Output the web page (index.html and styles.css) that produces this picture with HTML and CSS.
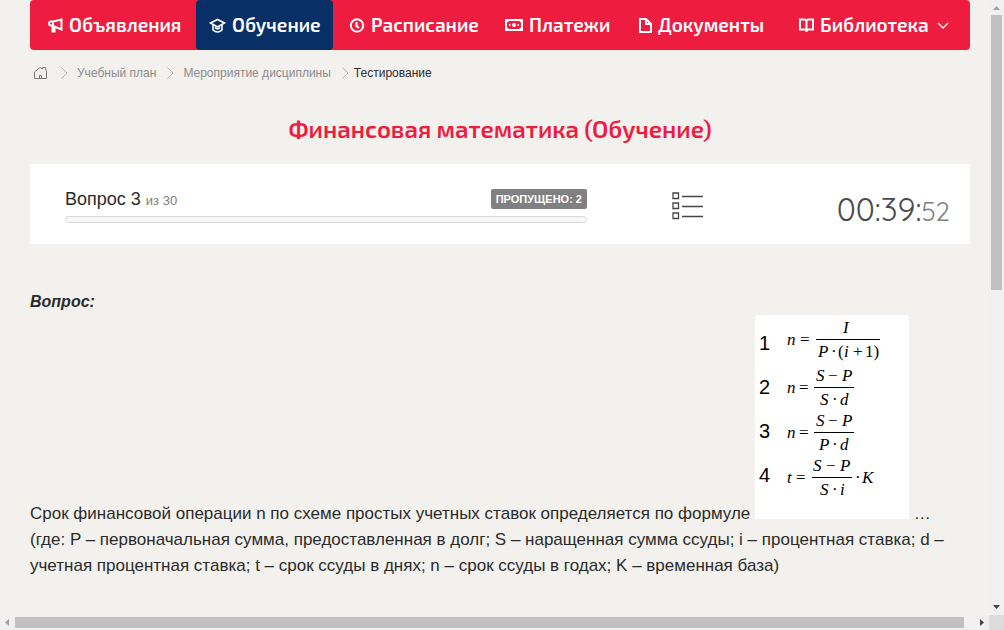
FILE: index.html
```html
<!DOCTYPE html>
<html lang="ru">
<head>
<meta charset="utf-8">
<meta name="viewport" content="width=device-width, initial-scale=1">
<title>Финансовая математика (Обучение)</title>
<link rel="stylesheet" href="styles.css">
</head>
<body>
<div class="viewport">
  <div class="page">
    <nav class="menu" aria-label="Главное меню">
      <a class="menu-item" href="#">
        <svg class="icon" width="15" height="15" viewBox="0 0 15 15"><path d="M5 3.500H3a2 2 0 0 0 0 4h2zM5 3.500L13.500 1.500v10L5 8M4.500 8v5.500h2V9"/></svg>
        Объявления</a>
      <a class="menu-item active" href="#">
        <svg class="icon cap" width="17" height="15" viewBox="0 0 17 15"><path d="M1.500 5L8.500 1.500l7 3.500-7 4zM4 7v5q4.500 4 9 0V7M6 9.500q2.500 3 5 0"/></svg>
        Обучение</a>
      <a class="menu-item" href="#">
        <svg class="icon" width="16" height="15" viewBox="0 0 16 15"><circle cx="8" cy="7.500" r="6.200"/><path d="M7.500 4v4l2.500 2"/></svg>
        Расписание</a>
      <a class="menu-item" href="#">
        <svg class="icon" width="18" height="12" viewBox="0 0 18 12"><path d="M1 1h16v10H1z"/><path class="solid" d="M1 1h4L1 4.500zM17 1h-4l4 3.500zM1 11h4L1 7.500zM17 11h-4l4-3.500zM7 6a2 2 0 1 0 4 0 2 2 0 0 0-4 0zM4 5h1.500v2H4zM12.500 5H14v2h-1.500z"/></svg>
        Платежи</a>
      <a class="menu-item" href="#">
        <svg class="icon" width="13" height="15" viewBox="0 0 13 15"><path d="M1 1h6l5 5v8H1zM7 1v5h5"/></svg>
        Документы</a>
      <a class="menu-item" href="#">
        <svg class="icon" width="15" height="15" viewBox="0 0 15 15"><path d="M1 1.500h5l1.500 1L9 1.500h5v10H9l-1.500 1-1.500-1H1zM7.500 2v12"/></svg>
        Библиотека
        <svg class="icon arrow" width="12" height="7" viewBox="0 0 12 7"><path d="M1 1l5 5 5-5"/></svg></a>
    </nav>
    <nav class="crumbs" aria-label="Навигация">
      <a href="#" aria-label="Главная"><svg class="home" width="13" height="14" viewBox="0 0 13 14"><path d="M.500 6L6 1.500l2.500 1.500V1.500h3l1 4.500v6.500H.500zM5.500 12.500v-3h2v3"/></svg></a>
      <svg class="chevron" width="7" height="12" viewBox="0 0 7 12"><path d="M.500.500L6 6 .500 11.500"/></svg>
      <a href="#">Учебный план</a>
      <svg class="chevron" width="7" height="12" viewBox="0 0 7 12"><path d="M.500.500L6 6 .500 11.500"/></svg>
      <a href="#">Мероприятие дисциплины</a>
      <svg class="chevron" width="7" height="12" viewBox="0 0 7 12"><path d="M.500.500L6 6 .500 11.500"/></svg>
      <span class="current">Тестирование</span>
    </nav>
    <h1 class="title">Финансовая математика (Обучение)</h1>
    <section class="status">
      <div class="progress">
        <div class="progress-head">
          <div class="number">Вопрос 3 <small>из 30</small></div>
          <span class="skipped">ПРОПУЩЕНО: 2</span>
        </div>
        <div class="bar"></div>
      </div>
      <button class="list-button" type="button" aria-label="Список вопросов">
        <svg width="32" height="28" viewBox="0 0 32 28"><path d="M1 1h5.500v5.500H1zM1 11h5.500v5.500H1zM1 21h5.500v5.500H1zM10 4.500h21M10 14.500h21M10 24.500h21"/></svg>
      </button>
      <div class="timer">00:39:<span>52</span></div>
    </section>
    <main class="question">
      <h2>Вопрос:</h2>
      <p>Срок финансовой операции n по схеме простых учетных ставок определяется по формуле
        <svg class="formulas" width="154" height="204" viewBox="0 0 154 204" role="img" aria-label="Варианты формул">
          <rect class="paper" width="154" height="204"/>
          <g class="index"><text x="4" y="35">1</text><text x="4" y="79">2</text><text x="4" y="123">3</text><text x="4" y="167">4</text></g>
          <g class="math">
            <text x="32" y="30">n</text><text class="up" x="45" y="30">=</text>
            <text x="88" y="18">I</text>
            <text x="63" y="42">P</text><text class="up" x="76" y="42">·</text><text class="up" x="83" y="42">(</text><text x="89" y="42">i</text><text class="up" x="98" y="42">+</text><text class="up" x="110" y="42">1)</text>
            <text x="32" y="78">n</text><text class="up" x="44" y="78">=</text>
            <text x="61" y="66">S</text><text class="up" x="73" y="66">−</text><text x="87" y="66">P</text>
            <text x="65" y="90">S</text><text class="up" x="77" y="90">·</text><text x="85" y="90">d</text>
            <text x="32" y="123">n</text><text class="up" x="44" y="123">=</text>
            <text x="61" y="111">S</text><text class="up" x="73" y="111">−</text><text x="87" y="111">P</text>
            <text x="64" y="135">P</text><text class="up" x="77" y="135">·</text><text x="85" y="135">d</text>
            <text x="32" y="168">t</text><text class="up" x="41" y="168">=</text>
            <text x="58" y="156">S</text><text class="up" x="71" y="156">−</text><text x="85" y="156">P</text>
            <text x="65" y="180">S</text><text class="up" x="77" y="180">·</text><text x="85" y="180">i</text>
            <text class="up" x="100" y="168">·</text><text x="107" y="168">K</text>
          </g>
          <path class="rule" d="M61 24.500h64M59 72.500h40M59 117.500h40M57 162.500h40"/>
        </svg>
        … <br>(где: P – первоначальная сумма, предоставленная в долг; S – наращенная сумма ссуды; i – процентная ставка; d – учетная процентная ставка; t – срок ссуды в днях; n – срок ссуды в годах; K – временная база)</p>
    </main>
  </div>
  <div class="scroll vertical" aria-hidden="true">
    <svg class="off" width="15" height="15" viewBox="0 0 15 15"><path d="M4 10h7L7.500 6z"/></svg>
    <div class="track"><div class="thumb"></div></div>
    <svg width="15" height="15" viewBox="0 0 15 15"><path d="M4 5h7L7.500 9z"/></svg>
  </div>
  <div class="scroll horizontal" aria-hidden="true">
    <svg class="off" width="15" height="15" viewBox="0 0 15 15"><path d="M9 4v7L5 7.500z"/></svg>
    <div class="track"><div class="thumb"></div></div>
    <svg width="15" height="15" viewBox="0 0 15 15"><path d="M6 4v7l4-3.500z"/></svg>
  </div>
  <div class="corner"></div>
</div>
</body>
</html>
```

FILE: styles.css
```css
* { box-sizing: border-box; }
body {
  margin: 0;
  background: #f3f1ed;
  color: #2b2b2b;
  font-family: "Liberation Sans", Arial, sans-serif;
}
a { color: inherit; text-decoration: none; }
svg { flex: none; }

.viewport {
  display: grid;
  grid-template: minmax(0, 1fr) 15px / minmax(0, 1fr) 15px;
  height: 100vh;
}
.page { overflow: hidden; padding: 0 19px 0 30px; }

.menu {
  display: grid;
  grid-template-columns: 166fr 137fr 156fr 134fr 160fr 187fr;
  height: 50px;
  border-radius: 4px;
  background: #ee1c3f;
  color: #fff;
  font: 600 19px/24px "Exo 2", Roboto, sans-serif;
}
.menu-item {
  display: flex;
  align-items: center;
  gap: 6px;
  min-width: 0;
  padding: 0 0 0 16px;
  border-radius: 4px;
  white-space: nowrap;
}
.menu-item:first-child { padding-left: 18px; }
.menu-item.active { padding-left: 13px; background: #083066; }
.icon { fill: none; stroke: #fff; stroke-width: 2; }
.icon .solid { fill: #fff; stroke: none; }
.icon.cap { stroke-width: 1.6; }
.icon.arrow { margin-left: 2px; stroke-width: 1.3; }

.crumbs {
  display: flex;
  align-items: center;
  height: 46px;
  padding-left: 4px;
  gap: 9px;
  color: #8c8c8c;
  font-size: 12px;
}
.crumbs a { display: block; }
.crumbs a:first-child { margin-right: 3px; }
.crumbs .current { color: #2b2b2b; }
.home { display: block; fill: none; stroke: #777; }
.chevron { margin-left: 2px; fill: none; stroke: #b5b5b5; }
.chevron + .current { margin-left: -4px; }

.title {
  margin: 15px 0 17px;
  color: #ee1c3f;
  text-align: center;
  font: 600 24px/36px "Exo 2", Roboto, sans-serif;
}

.status {
  display: grid;
  grid-template-columns: 522fr 202fr 161fr;
  align-items: center;
  height: 80px;
  padding: 4px 20px 0 35px;
  background: #fff;
}
.progress { display: grid; gap: 7px; }
.progress-head {
  display: flex;
  align-items: center;
  justify-content: space-between;
  height: 20px;
}
.number { font-size: 18px; }
.number small { color: #808080; font-size: 13px; }
.skipped {
  padding: 0 5px;
  border-radius: 2px;
  background: #808080;
  color: #fff;
  font: bold 11px/20px "Liberation Sans", Arial, sans-serif;
}
.bar { height: 7px; border: 1px solid #d8d8d8; border-radius: 4px; background: #f7f7f7; }
.list-button {
  justify-self: center;
  padding: 0;
  border: 0;
  background: none;
}
.list-button svg { display: block; fill: none; stroke: #444; stroke-width: 1.3; }
.timer {
  padding-top: 8px;
  color: #4a4a4a;
  text-align: right;
  font: 400 32px/40px Quicksand, Lato, sans-serif;
}
.timer span { color: #808080; font-size: 26px; }

.question { padding-top: 48px; }
.question h2 { margin: 0 0 3px; font: italic bold 16px/20px "Liberation Sans", Arial, sans-serif; }
.question p { margin: 0; font-size: 17px; line-height: 26px; }
.formulas { vertical-align: baseline; }
.paper { fill: #fff; }
.index { font: 20px "Liberation Sans", Arial, sans-serif; fill: #000; }
.math { font: italic 17px "Liberation Serif", "Times New Roman", serif; fill: #000; }
.math .up { font-style: normal; }
.rule { stroke: #000; }

.scroll { display: flex; background: #f0f0f0; }
.scroll svg { fill: #444; }
.scroll svg.off { fill: #a0a0a0; }
.vertical { flex-direction: column; }
.track { flex: 1; }
.vertical .track { padding: 0 2px; }
.horizontal .track { padding: 2px 0; }
.thumb { background: #c0c0c0; }
.vertical .thumb { height: 47%; }
.horizontal .thumb { width: 99%; height: 100%; }
.corner { background: #dcdcdc; }
```
